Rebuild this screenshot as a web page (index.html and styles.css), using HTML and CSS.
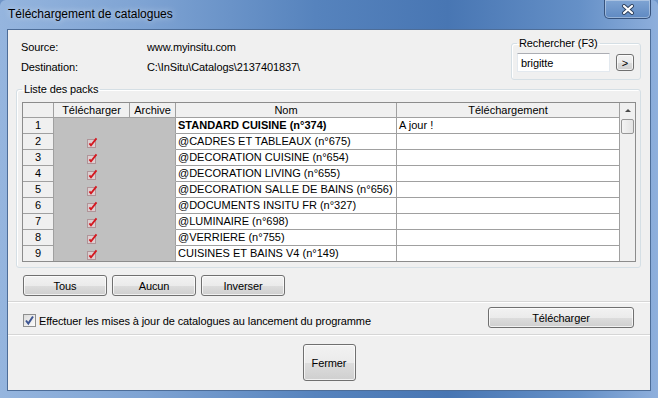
FILE: index.html
```html
<!DOCTYPE html>
<html lang="fr">
<head>
    <meta charset="UTF-8">
    <title>Téléchargement de catalogues</title>
    <link rel="stylesheet" href="styles.css">
</head>
<body>
    <div class="window">
        <div class="titlebar">
            <div class="title">Téléchargement de catalogues</div>
            <div class="close-btn">
                <svg width="14" height="11" viewBox="0 0 14 11">
                    <path d="M3 2 L11 9 M11 2 L3 9" stroke="#2c3f5c" stroke-width="4" stroke-linecap="round"/>
                    <path d="M3 2 L11 9 M11 2 L3 9" stroke="#ffffff" stroke-width="2.2" stroke-linecap="round"/>
                </svg>
            </div>
        </div>

        <div class="client">
            <div class="top">
                <div class="info">
                    <div class="info-row"><span class="info-label">Source:</span><span>www.myinsitu.com</span></div>
                    <div class="info-row"><span class="info-label">Destination:</span><span>C:\InSitu\Catalogs\2137401837\</span></div>
                </div>
                <fieldset class="search">
                    <legend>Rechercher (F3)</legend>
                    <div class="search-row">
                        <div class="search-input">brigitte</div>
                        <div class="btn small-btn">&gt;</div>
                    </div>
                </fieldset>
            </div>

            <fieldset class="packs">
                <legend>Liste des packs</legend>
                <div class="grid">
                    <table class="grid-table">
                        <colgroup>
                            <col style="width: 31px">
                            <col style="width: 76px">
                            <col style="width: 46px">
                            <col style="width: 221px">
                            <col style="width: 223px">
                        </colgroup>
                        <thead>
                            <tr>
                                <th></th>
                                <th>Télécharger</th>
                                <th>Archive</th>
                                <th>Nom</th>
                                <th>Téléchargement</th>
                            </tr>
                        </thead>
                        <tbody id="rows"></tbody>
                    </table>
                    <div class="scrollbar">
                        <div class="arrow-up"></div>
                        <div class="thumb"></div>
                    </div>
                </div>
            </fieldset>

            <div class="actions">
                <div class="btn">Tous</div>
                <div class="btn">Aucun</div>
                <div class="btn">Inverser</div>
            </div>

            <div class="options">
                <label class="check-label">
                    <span class="checkbox">
                        <svg width="11" height="11" viewBox="0 0 11 11">
                            <path d="M2 5.5 L4.3 8.5 L9 1.5" fill="none" stroke="#3d5592" stroke-width="2"/>
                        </svg>
                    </span>
                    Effectuer les mises à jour de catalogues au lancement du programme
                </label>
                <div class="btn wide-btn">Télécharger</div>
            </div>

            <div class="footer">
                <div class="btn close-dialog">Fermer</div>
            </div>
        </div>
    </div>

    <script>
    const packs = [
        { nom: "STANDARD CUISINE (n°374)", etat: "A jour !", bold: true, check: false },
        { nom: "@CADRES ET TABLEAUX (n°675)", etat: "", check: true },
        { nom: "@DECORATION CUISINE (n°654)", etat: "", check: true },
        { nom: "@DECORATION LIVING (n°655)", etat: "", check: true },
        { nom: "@DECORATION SALLE DE BAINS (n°656)", etat: "", check: true },
        { nom: "@DOCUMENTS INSITU FR (n°327)", etat: "", check: true },
        { nom: "@LUMINAIRE (n°698)", etat: "", check: true },
        { nom: "@VERRIERE (n°755)", etat: "", check: true },
        { nom: "CUISINES ET BAINS V4 (n°149)", etat: "", check: true }
    ];

    const tick = `<svg class="tick" width="12" height="11" viewBox="0 0 12 11">
        <rect x="1.5" y="2.5" width="8" height="8" fill="#dccfd1" stroke="#b09498"/>
        <path d="M3.4 6.4 L5 8.4 L10.5 1.4" fill="none" stroke="#d41820" stroke-width="1.8"/>
    </svg>`;

    const body = document.getElementById("rows");
    packs.forEach((p, i) => {
        const tr = document.createElement("tr");
        tr.innerHTML = `
            <td class="num">${i + 1}</td>
            <td class="off">${p.check ? tick : ""}</td>
            <td class="off"></td>
            <td class="name${p.bold ? " bold" : ""}">${p.nom}</td>
            <td class="name">${p.etat}</td>
        `;
        body.appendChild(tr);
    });
    </script>
</body>
</html>
```

FILE: styles.css
```css
body {
    margin: 0;
    background-color: #6f95c8;
    font-family: "Liberation Sans", Arial, sans-serif;
    font-size: 11px;
    letter-spacing: -0.1px;
    color: #000;
}
.window {
    width: 658px;
    height: 398px;
    box-sizing: border-box;
    padding: 0 7px 7px 7px;
    display: flex;
    flex-direction: column;
    background: linear-gradient(90deg, #95b5de 0%, #7ea3d3 22%, #5683bd 48%, #4876b3 68%, #6590c7 88%, #8eafdc 100%);
    border-radius: 6px 6px 0 0;
}
.titlebar {
    height: 29px;
    display: flex;
    justify-content: space-between;
    align-items: flex-start;
}
.title {
    padding: 7px 0 0 1px;
    font-size: 12px;
    letter-spacing: 0;
    text-shadow: 0 0 6px rgba(255, 255, 255, 0.7);
}
.close-btn {
    width: 47px;
    height: 19px;
    box-sizing: border-box;
    border: 1px solid #36527c;
    border-top: none;
    border-radius: 0 0 5px 5px;
    box-shadow: inset 0 0 0 1px rgba(255, 255, 255, 0.35);
    background: linear-gradient(#7fa4d3, #5f89c2);
    display: flex;
    align-items: center;
    justify-content: center;
}
.client {
    flex: 1;
    background-color: #f0f0f0;
    border: 1px solid #4d6d98;
    display: flex;
    flex-direction: column;
}
.top {
    display: flex;
    justify-content: space-between;
    align-items: flex-start;
    padding: 6px 9px 0 8px;
}
.info {
    padding: 1px 0 0 5px;
}
.info-row {
    line-height: 20px;
    display: flex;
}
.info-label {
    width: 126px;
}
fieldset {
    margin: 0;
    border: 1px solid #d5dfe5;
    border-radius: 3px;
    box-shadow: inset 1px 1px 0 #fff;
}
legend {
    padding: 0 2px;
    line-height: 15px;
}
.search {
    width: 130px;
    box-sizing: border-box;
    padding: 2px 6px 7px 5px;
}
.search-row {
    display: flex;
    align-items: center;
    gap: 6px;
}
.search-input {
    width: 93px;
    height: 19px;
    box-sizing: border-box;
    background-color: #fff;
    border: 1px solid #e3e9ef;
    border-top-color: #abadb3;
    padding: 2px 3px;
    line-height: 14px;
}
.btn {
    height: 21px;
    box-sizing: border-box;
    border: 1px solid #707070;
    border-radius: 3px;
    background: linear-gradient(#f2f2f2 0%, #ebebeb 50%, #dddddd 51%, #cfcfcf 100%);
    box-shadow: inset 0 0 0 1px rgba(255, 255, 255, 0.7);
    display: flex;
    align-items: center;
    justify-content: center;
}
.small-btn {
    width: 18px;
    height: 17px;
}
.packs {
    margin: 2px 9px 0 8px;
    padding: 5px 4px 5px 5px;
}
.grid {
    display: flex;
    border: 1px solid #8c8c8c;
    height: 158px;
    overflow: hidden;
    background-color: #fff;
}
.grid-table {
    table-layout: fixed;
    border-collapse: separate;
    border-spacing: 0;
    width: 597px;
    font-size: 11px;
    letter-spacing: 0;
}
.grid-table th,
.grid-table td {
    border-right: 1px solid #a0a0a0;
    border-bottom: 1px solid #a0a0a0;
    padding: 0;
    white-space: nowrap;
    overflow: hidden;
}
.grid-table th {
    height: 14px;
    font-weight: normal;
    background-color: #f0f0f0;
    line-height: 14px;
}
.grid-table td {
    height: 15px;
    line-height: 15px;
}
.num {
    text-align: center;
    background-color: #f0f0f0;
}
.off {
    background-color: #c0c0c0;
    border-color: #c0c0c0 !important;
    text-align: center;
}
.off:nth-child(3) {
    border-right-color: #a0a0a0 !important;
}
.tick {
    display: block;
    margin: 2px auto 0;
}
.name {
    padding-left: 2px !important;
}
.bold {
    font-weight: bold;
}
.scrollbar {
    width: 15px;
    flex: none;
    background-color: #f0f0f0;
    display: flex;
    flex-direction: column;
    align-items: center;
}
.arrow-up {
    margin-top: 6px;
    width: 0;
    height: 0;
    border-left: 3px solid transparent;
    border-right: 3px solid transparent;
    border-bottom: 3px solid #4a4a4a;
}
.thumb {
    margin-top: 7px;
    width: 13px;
    height: 15px;
    box-sizing: border-box;
    border: 1px solid #979797;
    border-radius: 2px;
    background: linear-gradient(90deg, #f3f3f3, #e3e3e3);
}
.actions {
    display: flex;
    gap: 5px;
    padding: 7px 15px 5px 15px;
}
.actions .btn {
    width: 84px;
}
.options {
    border-top: 1px solid #d6d6d6;
    box-shadow: inset 0 1px 0 #fff;
    display: flex;
    justify-content: space-between;
    align-items: flex-start;
    padding: 5px 16px 6px 15px;
}
.check-label {
    display: flex;
    align-items: center;
    gap: 3px;
    margin-top: 7px;
}
.checkbox {
    width: 13px;
    height: 13px;
    box-sizing: border-box;
    border: 1px solid #8e8f8f;
    background: linear-gradient(135deg, #dcdcdc, #fbfbfb);
    display: flex;
    align-items: center;
    justify-content: center;
}
.wide-btn {
    width: 146px;
}
.footer {
    flex: 1;
    border-top: 1px solid #d6d6d6;
    box-shadow: inset 0 1px 0 #fff;
    display: flex;
    justify-content: center;
    align-items: flex-start;
    padding-top: 9px;
}
.close-dialog {
    width: 53px;
    height: 37px;
}
```
